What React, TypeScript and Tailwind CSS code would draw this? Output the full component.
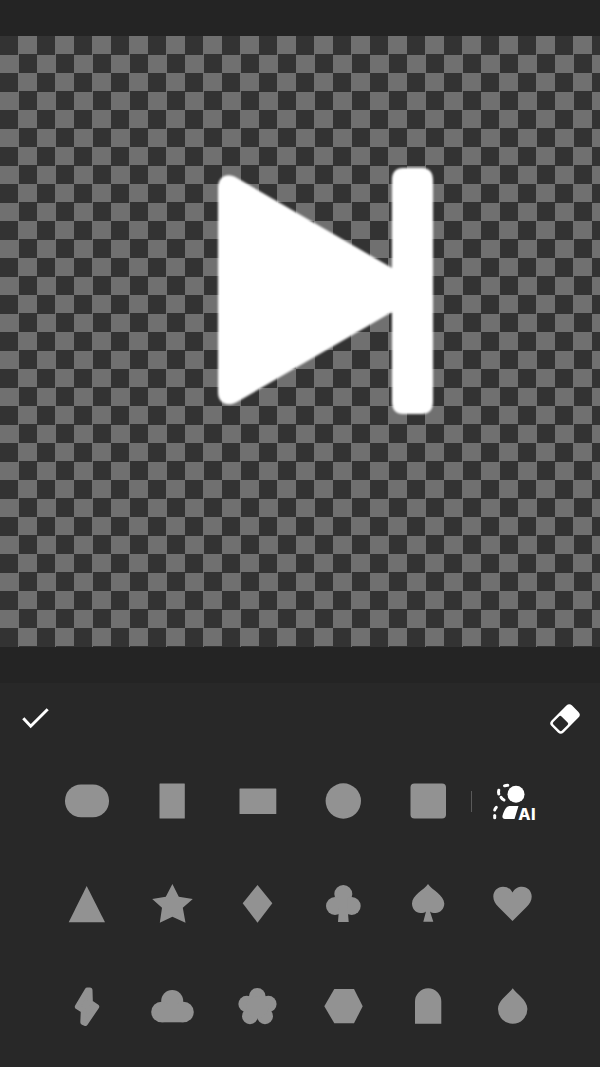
const GRAY = '#929292';

function Shape({ children }: { children: React.ReactNode }) {
  return (
    <svg viewBox="0 0 48 48" className="h-12 w-12" fill={GRAY}>
      {children}
    </svg>
  );
}

const SHAPES_TOP = [
  <rect key="pill" x="2" y="7.5" width="44" height="32.7" rx="16" />,
  <rect key="tall" x="11.5" y="6.5" width="25.3" height="35" rx="0.5" />,
  <rect key="wide" x="6.5" y="11.5" width="36.8" height="25.5" rx="0.5" />,
  <circle key="circle" cx="24.3" cy="24" r="17.7" />,
  <rect key="square" x="6.5" y="6.5" width="35.5" height="35" rx="4" />,
];

const SHAPES_REST = [
  <path key="triangle" d="M23.7 6L42 42.3H5.7Z" />,
  <path key="star" d="M24.4 4L30.8 16.7L44.8 19L34.8 27.8L37.5 42.7L24.4 36.7L11.8 42.7L14 27.8L4.2 19L17.8 16.7Z" />,
  <path key="diamond" d="M24.5 5L39.3 23.3L24.5 42.7L9.7 23.3Z" />,
  <g key="club">
    <circle cx="24.3" cy="14" r="9" />
    <circle cx="16" cy="26" r="9" />
    <circle cx="32.7" cy="26" r="9" />
    <path d="M20 18H28.6V28L29.7 42H19L20 28Z" />
  </g>,
  <path key="spade" d="M24 4C28 10 40 15 40.3 23.5C40.3 29 36 33 31.5 33C29 33 27 32.5 26 31.5L29.3 41.7H19.3L22 31.5C21 32.5 19 33 16.5 33C12 33 8 29 8 23.5C8 15 20 10 24 4Z" />,
  <path key="heart" d="M23.5 12.5C25.5 8.5 29 6.7 33 6.7C38.5 6.7 42.7 11 42.7 16.5C42.7 20.5 40.5 24 37.5 27L23.5 41L9.5 27C6.5 24 4.3 20.5 4.3 16.5C4.3 11 8.5 6.7 14 6.7C18 6.7 21.5 8.5 23.5 12.5Z" />,
  <path key="bolt" d="M26.8 8.3H24.3L14.6 24.7L20.5 28.4L20 40.2L22.3 41.2L33.5 24.7L27.2 20.6Z" stroke={GRAY} strokeWidth="5.4" strokeLinejoin="round" />,
  <g key="cloud">
    <circle cx="24.2" cy="19" r="11" />
    <circle cx="13.5" cy="30" r="10.3" />
    <circle cx="35.5" cy="30" r="10.3" />
    <rect x="13.5" y="22" width="22" height="18.3" />
  </g>,
  <g key="flower">
    <circle cx="24.3" cy="14.3" r="8.3" />
    <circle cx="13.7" cy="22" r="8.3" />
    <circle cx="35.3" cy="22" r="8.3" />
    <circle cx="17" cy="34.2" r="8" />
    <circle cx="32" cy="34.2" r="8" />
    <circle cx="24.3" cy="25" r="11" />
  </g>,
  <path key="hexagon" d="M15.3 7H35L43.7 24.2L35 41.3H15.3L5.3 24.2Z" />,
  <path key="arch" d="M11 41.7V19.5A13.15 13.15 0 0 1 37.3 19.5V41.7Z" />,
  <path key="drop" d="M23.7 6.3C27 11.5 38.4 18 38.4 27A14.7 14.7 0 0 1 9 27C9 18 20.4 11.5 23.7 6.3Z" />,
];

function AiPerson() {
  return (
    <div className="flex items-end">
      <svg viewBox="490 782 34 38" className="h-[38px] w-[34px]" fill="white">
        <circle cx="515" cy="794.3" r="8.5" />
        <path d="M509 806H517.5L513.5 819H504C501.5 819 501 817 501.7 815C503 811 505 806 509 806Z" />
        <g fill="none" stroke="white" strokeWidth="3" strokeLinecap="round">
          <path d="M503.5 785.8Q505 785.2 506.8 785.2" />
          <path d="M497.8 790.2Q497.2 792 497.8 794" />
          <path d="M500 797.2Q501 799 503 800" />
          <path d="M495.3 807.3Q494 808.5 493.7 810" />
          <path d="M493.7 815.6V817.8" />
        </g>
      </svg>
      <span className="mb-[-1px] ml-[-7px] font-['Inter'] text-[16px] leading-[14px] font-extrabold tracking-[0.5px] text-white">
        AI
      </span>
    </div>
  );
}

export default function App() {
  return (
    <div className="flex h-[1067px] w-[600px] flex-col bg-[#282828]">
      <div className="h-9 bg-[#242424]" />

      <div className="h-[611px] bg-[conic-gradient(#707070_25%,#333333_0_50%,#707070_0_75%,#333333_0)] bg-[length:37px_37px] pt-[130px] pl-[216px]">
        <svg viewBox="216 166 220 250" className="h-[250px] w-[220px] blur-[0.8px]" fill="white">
          <path d="M218 188C218 176 228 172 237 178L392 268V180C392 172 396 168 403 168H422C429 168 433 172 433 180V402C433 410 429 414 422 414H403C396 414 392 410 392 402V312L237 402C228 407 218 404 218 392Z" />
        </svg>
      </div>

      <div className="h-9 bg-[#242424]" />

      <div className="flex-1">
        <div className="flex h-[67px] items-start justify-between pt-5 pr-[19px] pl-[22px]">
          <svg viewBox="0 0 28 30" className="h-[30px] w-7" fill="none" stroke="white" strokeWidth="3">
            <path d="M1.3 15.3L8.7 23.2L25.7 6.3" />
          </svg>
          <svg viewBox="0 0 32 32" className="h-8 w-8">
            <g transform="rotate(-45 16 16)">
              <rect x="1.5" y="7.5" width="29" height="17" rx="4" fill="white" />
              <rect x="3.9" y="9.9" width="11.5" height="12.2" rx="1.8" fill="#282828" />
            </g>
          </svg>
        </div>

        <div className="grid auto-rows-[102.5px] grid-cols-6 px-[44px]">
          {SHAPES_TOP.map((s) => (
            <div key={s.key} className="flex items-center justify-center">
              <Shape>{s}</Shape>
            </div>
          ))}
          <div className="flex items-center">
            <div className="h-[21px] w-[1.5px] bg-[#5a5a5a]" />
            <div className="ml-[19px]">
              <AiPerson />
            </div>
          </div>
          {SHAPES_REST.map((s) => (
            <div key={s.key} className="flex items-center justify-center">
              <Shape>{s}</Shape>
            </div>
          ))}
        </div>
      </div>
    </div>
  );
}
